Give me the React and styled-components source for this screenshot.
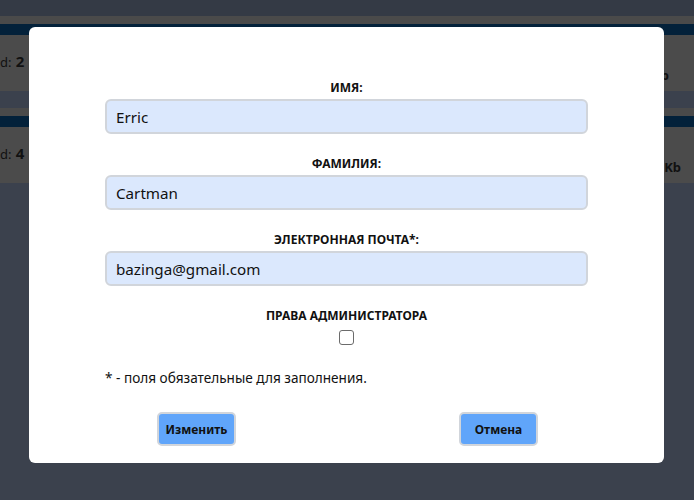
import React from 'react';
import styled, { createGlobalStyle } from 'styled-components';

const GlobalStyle = createGlobalStyle`
  html, body {
    margin: 0;
    padding: 0;
  }
  body {
    background: #3b414d;
    font-family: "Noto Sans", "DejaVu Sans", sans-serif;
    color: #111;
  }
`;

const files = [
  { id: 2, size: '1.2 Mb', right: 25 },
  { id: 4, size: '34 Kb', right: 13 },
];

const App = () => {
  return (
    <>
      <GlobalStyle />
      <Page>
        <TopBar />
        <List>
          {files.map((file) => (
            <Card key={file.id}>
              <CardHeader />
              <CardBody>
                <LeftCell>d: <b>{file.id}</b></LeftCell>
                <RightCell $right={file.right}>{file.size}</RightCell>
              </CardBody>
            </Card>
          ))}
        </List>
      </Page>
      <Modal>
        <Field>
          <Label>Имя:</Label>
          <Input defaultValue='Erric' />
        </Field>
        <Field>
          <Label>Фамилия:</Label>
          <Input defaultValue='Cartman' />
        </Field>
        <Field>
          <Label>Электронная почта*:</Label>
          <Input defaultValue='bazinga@gmail.com' />
        </Field>
        <Field>
          <Label>Права администратора</Label>
          <Checkbox type='checkbox' />
        </Field>
        <Note>* - поля обязательные для заполнения.</Note>
        <Actions>
          <Button type='button'>Изменить</Button>
          <Button type='button'>Отмена</Button>
        </Actions>
      </Modal>
    </>
  );
};

const Page = styled.div`
  min-height: 500px;
`;

const TopBar = styled.header`
  height: 16px;
  background: #343a45;
`;

const List = styled.section`
  display: flex;
  flex-direction: column;
  gap: 17px;
`;

const Card = styled.article`
  border-top: 8px solid #4a4a4a;
  background: #4b4b4b;
`;

const CardHeader = styled.div`
  height: 11px;
  background: #03213a;
`;

const CardBody = styled.div`
  height: 56px;
  display: flex;
  justify-content: space-between;
  font-size: 13px;
`;

const LeftCell = styled.span`
  padding: 16px 0 0 0;
  white-space: nowrap;
  b {
    margin-left: 1px;
    font-size: 15px;
  }
`;

const RightCell = styled.span`
  padding-top: 31px;
  padding-right: ${(p) => p.$right}px;
  font-weight: 700;
  font-size: 13px;
  white-space: nowrap;
`;

const Modal = styled.div`
  position: absolute;
  top: 27px;
  left: 29px;
  width: 635px;
  height: 436px;
  box-sizing: border-box;
  background: #fff;
  border-radius: 6px;
  padding: 54px 76px 17px;
  display: flex;
  flex-direction: column;
`;

const Field = styled.div`
  display: flex;
  flex-direction: column;
  align-items: center;
  gap: 4px;
  margin-bottom: 23px;
`;

const Label = styled.label`
  font-size: 12px;
  line-height: 14px;
  font-weight: 700;
  text-transform: uppercase;
  color: #111;
`;

const Input = styled.input`
  width: 100%;
  height: 35px;
  box-sizing: border-box;
  border: 2px solid #d1d5db;
  border-radius: 6px;
  background: #dbe8fd;
  padding: 0 9px;
  font-family: inherit;
  font-size: 15.2px;
  color: #111;
  outline: none;
`;

const Checkbox = styled.input`
  appearance: none;
  margin: 3px 0 0;
  width: 15px;
  height: 15px;
  border: 1px solid #6b6b6b;
  border-radius: 3px;
  background: #fff;
`;

const Note = styled.p`
  margin: 1px 0 0;
  font-size: 13.6px;
  line-height: 18px;
`;

const Actions = styled.div`
  margin-top: auto;
  display: flex;
  justify-content: space-between;
  padding: 0 50px 0 52px;
`;

const Button = styled.button`
  height: 34px;
  width: 79px;
  padding: 0;
  border: 2px solid #d1d5db;
  border-radius: 5px;
  background: #60a5fa;
  font-family: inherit;
  font-size: 12px;
  font-weight: 700;
  color: #111;
`;

export default App;
